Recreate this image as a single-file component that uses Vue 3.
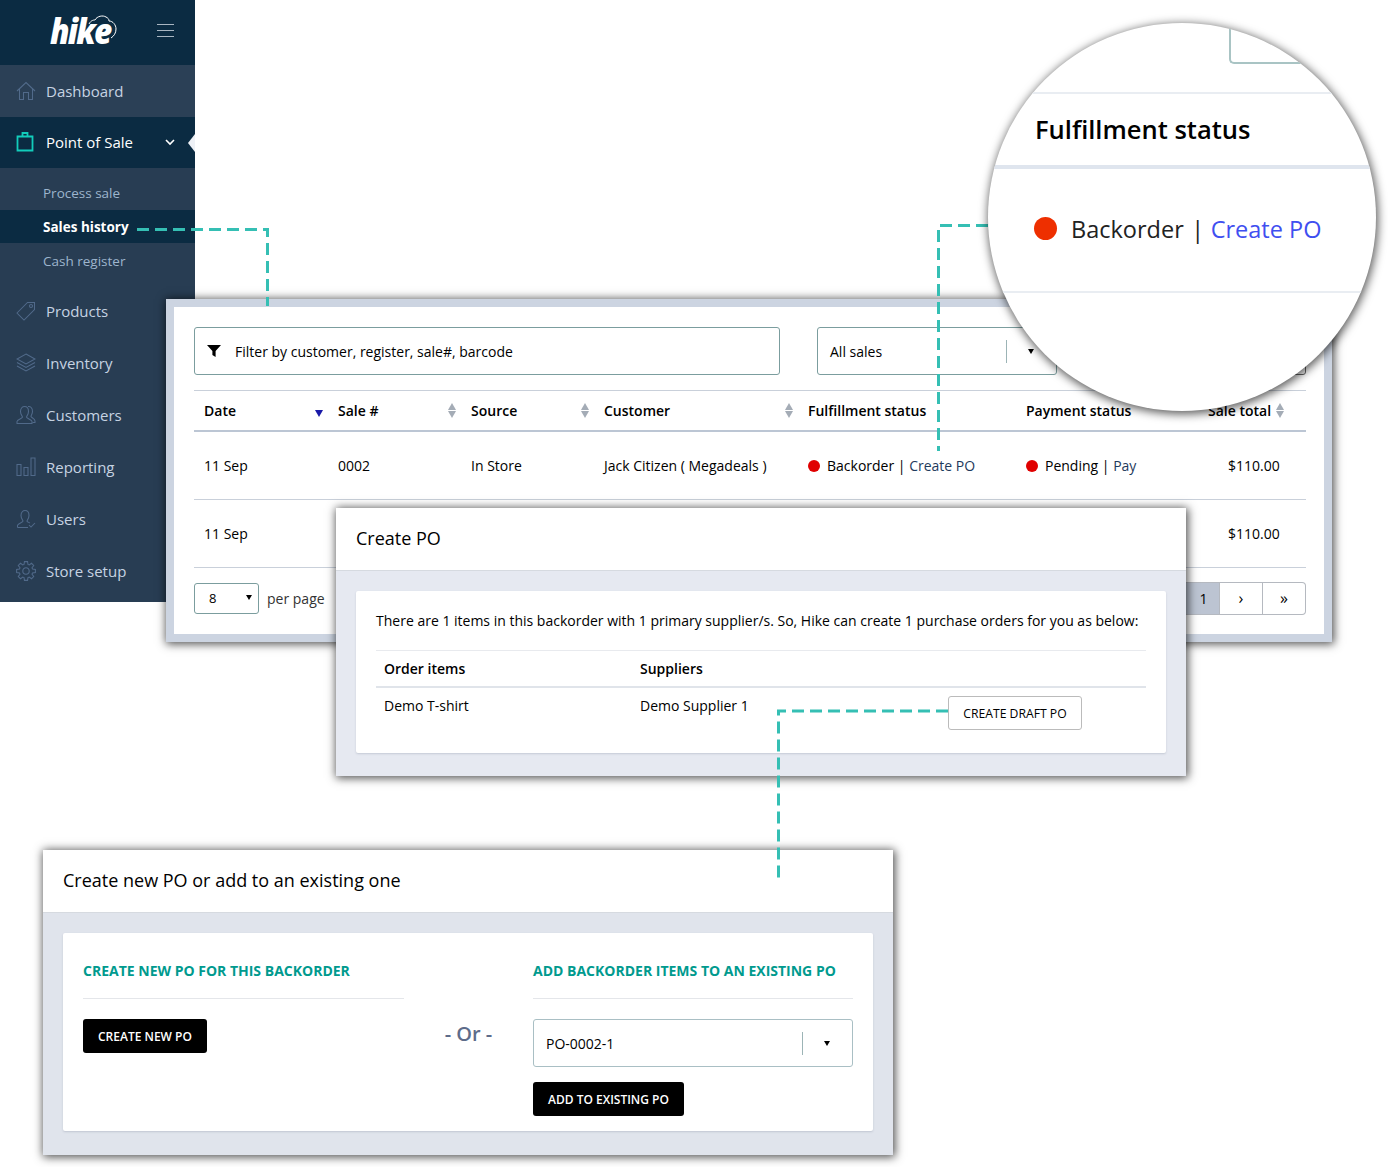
<script setup>
const person = 'M1.5 18.5V16.5C1.5 14.3 6.5 13.8 7 12.2C7 11.2 5 9.6 5 6.5C5 3.2 7 1.5 9 1.5C11 1.5 13 3.2 13 6.5C13 9.6 11 11.2 11 12.2C11.3 13 13 13.5 14 14'
function gear() {
  const pts = []
  const n = 8
  for (let i = 0; i < n; i++) {
    const a = (i / n) * Math.PI * 2
    const s = Math.PI / n
    const p = (r, t) => `${(10 + r * Math.cos(t)).toFixed(2)} ${(10 + r * Math.sin(t)).toFixed(2)}`
    pts.push(p(6.8, a - s * 0.75), p(9.5, a - s * 0.42), p(9.5, a + s * 0.42), p(6.8, a + s * 0.75))
  }
  return 'M' + pts.join('L') + 'Z'
}
const nav = [
  { label: 'Products', icon: ['M1 12L11.5 1.5H18.5V8.5L8 19Z', 'M13.5 5a1.5 1.5 0 1 0 3 0a1.5 1.5 0 1 0-3 0'] },
  { label: 'Inventory', icon: ['M10 1L19 6L10 11L1 6Z', 'M1 9.5L10 14.5L19 9.5', 'M1 13L10 18L19 13'] },
  { label: 'Customers', icon: ['M1 18.5V16.5C1 14.3 6 13.8 6.5 12.2C6.5 11.2 4.5 9.6 4.5 6.5C4.5 3.2 6.5 1.5 8.5 1.5C10.5 1.5 12.5 3.2 12.5 6.5C12.5 9.6 10.5 11.2 10.5 12.2C11 13.8 16 14.3 16 16.5V18.5Z', 'M12 1.5C14.5 1 16.5 3 16.5 6.5C16.5 9 15 10.5 15 11.5C15.5 13 19 13.5 19 16V17.5H16.5'] },
  { label: 'Reporting', icon: ['M1 7.5h4v11H1z', 'M8 10.5h4v8H8z', 'M15 1h4v17.5h-4z'] },
  { label: 'Users', icon: [person, 'M1.5 18.5H12', 'M13 16l2 2l4-4'] },
  { label: 'Store setup', icon: [gear(), 'M6.8 10a3.2 3.2 0 1 0 6.4 0a3.2 3.2 0 1 0-6.4 0'] }
]
const cols = [
  { label: 'Date', sort: 'active' },
  { label: 'Sale #', sort: 'both' },
  { label: 'Source', sort: 'both' },
  { label: 'Customer', sort: 'both' },
  { label: 'Fulfillment status' },
  { label: 'Payment status' }
]
</script>

<template>
  <div class="canvas">
    <aside class="sidebar">
      <div class="brand">
        <span class="logo">hike</span>
        <svg class="cloud" width="40" height="34" viewBox="0 0 40 34" fill="none" stroke="#fff" stroke-width="1">
          <path d="M4 11C6 7 9 7 10 7C12 3 18 2 21 4C23 5 24 6 24 8C28 8 31 12 31 16C31 20 29 23 26 25" />
        </svg>
        <span class="burger"><i></i><i></i><i></i></span>
      </div>
      <div class="item soft">
        <svg class="ico" viewBox="0 0 20 20"><path d="M1 10L10 1.5L19 10M3.5 8V18.5H7.5V11.5H12.5V18.5H16.5V8" /></svg>
        <span>Dashboard</span>
      </div>
      <div class="item open">
        <svg class="ico teal" viewBox="0 0 20 20"><path d="M1.5 4.5H16.5V18.5H1.5Z M6.5 4.5V1H11.5V4.5" /></svg>
        <span>Point of Sale</span>
        <svg class="chev" width="10" height="7" viewBox="0 0 10 7"><path d="M1 1L5 5L9 1" /></svg>
        <b class="pointer"></b>
      </div>
      <div class="sub">
        <div class="subitem">Process sale</div>
        <div class="subitem current">Sales history</div>
        <div class="subitem">Cash register</div>
      </div>
      <div v-for="n in nav" :key="n.label" class="item">
        <svg class="ico" viewBox="0 0 20 20"><path v-for="d in n.icon" :key="d" :d="d" /></svg>
        <span>{{ n.label }}</span>
      </div>
    </aside>

    <section class="win sales">
      <div class="toolbar">
        <div class="field filter">
          <svg width="14" height="12" viewBox="0 0 14 12"><path d="M0 0H14L8.6 6V12L5.4 10V6Z" fill="#000" /></svg>
          <span>Filter by customer, register, sale#, barcode</span>
        </div>
        <div class="field select allsales">
          <span>All sales</span><i class="sep"></i><i class="caret"></i>
        </div>
        <div class="field third"></div>
      </div>
      <div class="grid head">
        <div v-for="c in cols" :key="c.label" class="th">
          <span>{{ c.label }}</span>
          <i v-if="c.sort === 'active'" class="desc"></i>
          <span v-if="c.sort === 'both'" class="sort"><i></i><i></i></span>
        </div>
        <div class="th total"><span>Sale total</span><span class="sort inline"><i></i><i></i></span></div>
      </div>
      <div class="grid row">
        <div class="td">11 Sep</div>
        <div class="td">0002</div>
        <div class="td">In Store</div>
        <div class="td">Jack Citizen ( Megadeals )</div>
        <div class="td status"><i class="dot"></i>Backorder | <a>Create PO</a></div>
        <div class="td status"><i class="dot"></i>Pending | <a>Pay</a></div>
        <div class="td amount">$110.00</div>
      </div>
      <div class="grid row">
        <div class="td">11 Sep</div>
        <div class="td"></div>
        <div class="td"></div>
        <div class="td"></div>
        <div class="td"></div>
        <div class="td"></div>
        <div class="td amount">$110.00</div>
      </div>
      <div class="foot">
        <div class="perpage"><span>8</span><i class="caret"></i></div>
        <span class="pp">per page</span>
        <div class="pager">
          <span class="on">1</span>
          <span>›</span>
          <span>»</span>
        </div>
      </div>
    </section>

    <section class="win modal po">
      <header class="mhead">Create PO</header>
      <div class="mbody">
        <div class="card pocard">
          <p class="note">There are 1 items in this backorder with 1 primary supplier/s. So, Hike can create 1 purchase orders for you as below:</p>
          <div class="pohead"><span>Order items</span><span>Suppliers</span></div>
          <div class="porow">
            <span>Demo T-shirt</span><span>Demo Supplier 1</span>
            <button class="ghost">CREATE DRAFT PO</button>
          </div>
        </div>
      </div>
    </section>

    <section class="win modal choose">
      <header class="mhead">Create new PO or add to an existing one</header>
      <div class="mbody alt">
        <div class="card two">
          <div class="col left">
            <h3>CREATE NEW PO FOR THIS BACKORDER</h3>
            <button class="solid">CREATE NEW PO</button>
          </div>
          <div class="or">- Or -</div>
          <div class="col right">
            <h3>ADD BACKORDER ITEMS TO AN EXISTING PO</h3>
            <div class="field select po-select">
              <span>PO-0002-1</span><i class="sep"></i><i class="caret"></i>
            </div>
            <button class="solid">ADD TO EXISTING PO</button>
          </div>
        </div>
      </div>
    </section>

    <svg class="dashes" width="1388" height="1167" fill="none" stroke="#35bfb4" stroke-width="3" stroke-dasharray="12 6">
      <path d="M137 229.5H267.5V306" />
      <path d="M988 225.5H938.5V451" />
      <path d="M948 711H778.5V878" />
    </svg>

    <div class="lens">
      <div class="lens-box"></div>
      <div class="lens-head">Fulfillment status</div>
      <div class="lens-row"><i></i><span>Backorder</span><span class="bar">|</span><a>Create PO</a></div>
    </div>
  </div>
</template>

<style>
html, body { margin: 0; background: #fff; }
</style>

<style scoped>
.canvas {
  position: relative;
  width: 1388px;
  height: 1167px;
  overflow: hidden;
  background: #fff;
  color: #000;
  font-family: "Open Sans", "Liberation Sans", sans-serif;
  font-size: 14px;
}
.canvas i { display: block; font-style: normal; }

/* sidebar */
.sidebar {
  width: 195px;
  height: 602px;
  background: #283d53;
  color: #c6d3e2;
  font-size: 15px;
}
.brand {
  position: relative;
  height: 65px;
  background: #0b2b42;
}
.logo {
  position: absolute;
  left: 50px;
  top: 7px;
  font-weight: 800;
  font-style: italic;
  font-size: 35px;
  line-height: 48px;
  letter-spacing: -2px;
  color: #fff;
  transform: scaleX(0.9);
  transform-origin: left center;
}
.cloud { position: absolute; left: 85px; top: 13px; }
.burger {
  position: absolute;
  left: 157px;
  top: 24px;
  display: flex;
  flex-direction: column;
  gap: 5px;
  width: 17px;
}
.burger i { height: 1px; background: #a9b6c2; }
.item {
  position: relative;
  display: flex;
  align-items: center;
  height: 52px;
  padding-left: 16px;
  box-sizing: border-box;
}
.item.soft { background: #2b4056; }
.item.open { height: 51px; padding-bottom: 2px; background: #0b2b42; color: #fff; }
.ico {
  width: 20px;
  height: 20px;
  margin-right: 10px;
  fill: none;
  stroke: #516a8a;
  stroke-width: 1.05;
}
.ico.teal { stroke: #12cdbb; stroke-width: 1.8; }
.chev {
  position: absolute;
  left: 165px;
  top: 22px;
  fill: none;
  stroke: #fff;
  stroke-width: 1.6;
}
.pointer {
  position: absolute;
  right: 0;
  top: 17px;
  width: 0;
  height: 0;
  border: solid transparent;
  border-width: 9px 7px 9px 0;
  border-right-color: #eef1f6;
}
.sub { padding: 8px 0 7px; font-size: 13.5px; color: #9db5cd; }
.subitem {
  height: 34px;
  line-height: 34px;
  padding-left: 43px;
}
.subitem.current { height: 33px; margin-bottom: 1px; background: #0b2b42; color: #fff; font-weight: 700; }

/* windows */
.win {
  position: absolute;
  box-sizing: border-box;
  box-shadow: 1px 1px 9px 1px rgba(0, 0, 0, 0.7);
}
.sales {
  left: 166px;
  top: 299px;
  width: 1166px;
  height: 343px;
  border: 8px solid #ccd4e1;
  background: #fff;
  padding: 20px 18px 20px 20px;
}
.toolbar { display: flex; height: 48px; margin-bottom: 15px; }
.field {
  box-sizing: border-box;
  display: flex;
  align-items: center;
  height: 48px;
  border: 1px solid #7b9d9e;
  border-radius: 3px;
  background: #fff;
}
.filter { width: 586px; padding-left: 12px; gap: 14px; }
.select { position: relative; padding-left: 12px; }
.sep { position: absolute; right: 49px; top: 12px; width: 1px; height: 23px; background: #9cb4b6; }
.caret {
  width: 0;
  height: 0;
  border: solid transparent;
  border-width: 5px 3.5px 0;
  border-top-color: #000;
}
.select .caret { position: absolute; right: 22px; top: 21px; }
.allsales { width: 240px; margin-left: 37px; }
.third { width: 231px; margin-left: 18px; border-color: #666; }

.grid { display: grid; grid-template-columns: 134px 133px 133px 204px 218px 182px 108px; }
.head {
  height: 42px;
  box-sizing: border-box;
  border-top: 1px solid #c9d0da;
  border-bottom: 2px solid #bcc6d4;
  align-items: center;
  font-weight: 600;
}
.th { position: relative; padding-left: 10px; white-space: nowrap; }
.row {
  height: 68px;
  box-sizing: border-box;
  border-bottom: 1px solid #c9d0da;
  align-items: center;
}
.td { padding-left: 10px; white-space: nowrap; }
.desc {
  position: absolute;
  left: 121px;
  top: 9px;
  width: 0;
  height: 0;
  border: solid transparent;
  border-width: 7px 4px 0;
  border-top-color: #1a1aa8;
}
.sort {
  position: absolute;
  left: 120px;
  top: 2px;
  display: flex;
  flex-direction: column;
  gap: 1px;
}
.th:nth-child(4) .sort { left: 191px; }
.sort i {
  width: 0;
  height: 0;
  border: solid transparent;
  border-width: 0 4px 7px;
  border-bottom-color: #a4acb6;
}
.sort i + i { border-width: 7px 4px 0; border-top-color: #a4acb6; border-bottom-color: transparent; }
.sort.inline { left: 78px; }
.status { display: flex; align-items: center; white-space: pre; }
.dot {
  width: 12px;
  height: 12px;
  border-radius: 50%;
  background: #e00000;
  margin-right: 7px;
}
.status a { color: #1e3a5c; }
.amount { padding-left: 30px; }
.foot { position: relative; display: flex; align-items: center; height: 66px; padding-bottom: 6px; box-sizing: border-box; }
.perpage {
  position: relative;
  box-sizing: border-box;
  width: 65px;
  height: 31px;
  padding-left: 14px;
  line-height: 29px;
  font-size: 13px;
  border: 1px solid #7b9d9e;
  border-radius: 3px;
}
.perpage .caret { position: absolute; right: 6px; top: 11px; }
.pp { margin-left: 8px; color: #333; }
.pager {
  margin-left: auto;
  display: flex;
  height: 33px;
  box-sizing: border-box;
  border: 1px solid #b5b9c0;
  border-left: 0;
  border-radius: 0 4px 4px 0;
  font-size: 16px;
  line-height: 31px;
  text-align: center;
}
.pager span { width: 42px; border-left: 1px solid #b5b9c0; }
.pager .on { width: 35px; padding-left: 4px; box-sizing: border-box; border-left: 0; background: #bcc4d2; font-size: 14px; }

.dashes { position: absolute; left: 0; top: 0; pointer-events: none; }

/* modals */
.modal { width: 850px; background: #fff; }
.mhead {
  height: 63px;
  box-sizing: border-box;
  padding: 0 20px;
  font-size: 18px;
  line-height: 60px;
  border-bottom: 1px solid #d6dae0;
}
.mbody { padding: 20px; background: #e6e9f1; }
.mbody.alt { background: #e0e4ec; }
.card {
  background: #fff;
  border-radius: 2px;
  box-shadow: 0 1px 2px rgba(120, 130, 150, 0.3);
}
.po { left: 336px; top: 508px; height: 268px; }
.po .mbody { height: 205px; box-sizing: border-box; }
.pocard { height: 162px; padding: 0 20px; box-sizing: border-box; }
.note { margin: 0; height: 59px; line-height: 60px; border-bottom: 1px solid #e8eaee; white-space: nowrap; }
.pohead {
  display: grid;
  grid-template-columns: 256px 1fr;
  height: 37px;
  box-sizing: border-box;
  padding-left: 8px;
  align-items: center;
  font-weight: 600;
  border-bottom: 2px solid #e0e4ea;
}
.porow {
  position: relative;
  display: grid;
  grid-template-columns: 256px 1fr;
  padding: 8px 0 0 8px;
  line-height: 19px;
}
.ghost {
  position: absolute;
  left: 572px;
  top: 8px;
  width: 134px;
  height: 34px;
  background: #fff;
  border: 1px solid #bbb;
  border-radius: 3px;
  font: inherit;
  font-size: 12.2px;
  color: #000;
  padding: 0;
}
.choose { left: 43px; top: 850px; height: 305px; }
.choose .mbody { height: 242px; box-sizing: border-box; }
.two { height: 198px; padding: 0 20px; box-sizing: border-box; display: flex; }
.col h3 {
  margin: 0 0 20px;
  height: 66px;
  line-height: 75px;
  box-sizing: border-box;
  font-size: 14px;
  font-weight: 700;
  color: #009a8e;
  border-bottom: 1px solid #e4e6ea;
  white-space: nowrap;
}
.left { width: 321px; }
.right { width: 320px; }
.or {
  width: 129px;
  text-align: center;
  padding-top: 87px;
  font-size: 20px;
  font-weight: 600;
  line-height: 27px;
  color: #5d6c8a;
}
.solid {
  display: block;
  height: 34px;
  background: #000;
  color: #fff;
  border: 0;
  border-radius: 3px;
  font: inherit;
  font-size: 12px;
  font-weight: 600;
  padding: 0 15px;
}
.po-select { width: 320px; margin-bottom: 15px; border-color: #a9bfc4; }

/* magnifier */
.lens {
  position: absolute;
  left: 988px;
  top: 23px;
  width: 388px;
  height: 388px;
  border-radius: 50%;
  overflow: hidden;
  background: #fff;
  box-shadow: 1px 2px 10px 1px rgba(0, 0, 0, 0.65);
}
.lens-box {
  height: 41px;
  width: 140px;
  margin-left: 241px;
  box-sizing: border-box;
  border: 2px solid #a9c4c4;
  border-top: 0;
  border-right: 0;
  border-radius: 0 0 0 5px;
}
.lens-head {
  margin-top: 28px;
  height: 77px;
  box-sizing: border-box;
  padding-left: 47px;
  font-size: 25.5px;
  font-weight: 600;
  line-height: 71px;
  border-top: 2px solid #e9edf2;
  border-bottom: 4px solid #dfe5ee;
  white-space: nowrap;
}
.lens-row {
  height: 124px;
  padding-bottom: 3px;
  box-sizing: border-box;
  display: flex;
  align-items: center;
  padding-left: 46px;
  font-size: 23.5px;
  color: #222;
  border-bottom: 2px solid #e9edf2;
  white-space: nowrap;
}
.lens-row i {
  width: 23px;
  height: 23px;
  border-radius: 50%;
  background: #ee2f00;
  margin-right: 14px;
}
.lens-row .bar { margin: 0 6.5px 0 7.5px; }
.lens-row a { color: #3f4ff0; }
</style>
